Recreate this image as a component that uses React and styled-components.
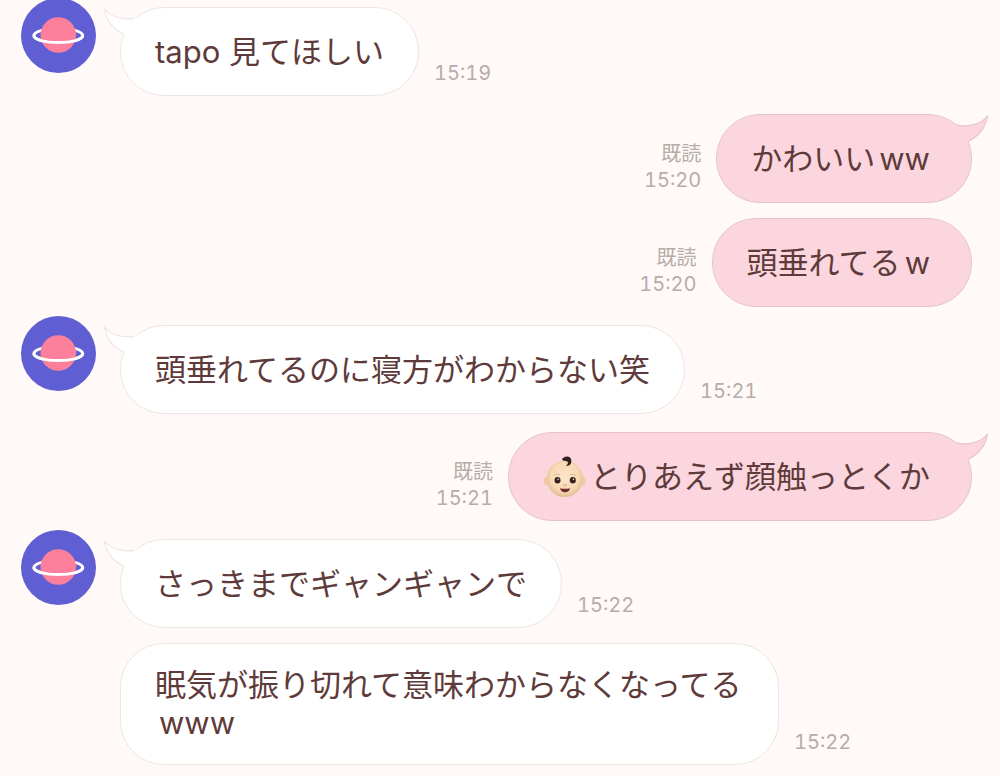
import React from 'react';
import styled, { createGlobalStyle, css } from 'styled-components';

const GlobalStyle = createGlobalStyle`
  * { box-sizing: border-box; }
  body {
    margin: 0;
    background: #fffaf7;
    font-family: Inter, "Noto Sans CJK JP", sans-serif;
    overflow-x: hidden;
  }
`;

const theme = {
  received: { fill: '#ffffff', line: '#ede5e3' },
  sent: { fill: '#fbd6de', line: '#e6c3cb' },
};

const Chat = styled.main`
  display: flex;
  flex-direction: column;
  gap: 18px;
  padding: 7px 28px 11px 21px;
`;

const Group = styled.section`
  display: flex;
  align-items: flex-start;
  gap: 24px;
  justify-content: ${(p) => (p.$sent ? 'flex-end' : 'flex-start')};
`;

const AvatarImage = styled.svg`
  flex: none;
  width: 75px;
  height: 75px;
  margin-top: -9px;
`;

const Messages = styled.div`
  display: flex;
  flex-direction: column;
  gap: 15px;
  min-width: 0;
`;

const Row = styled.div`
  display: flex;
  align-items: flex-end;
  gap: 15px;
  flex-direction: ${(p) => (p.$sent ? 'row-reverse' : 'row')};
`;

const Bubble = styled.div`
  position: relative;
  display: flex;
  align-items: center;
  max-width: 659px;
  min-height: 89px;
  padding: ${(p) => (p.$sent ? '22px 41px 22px 34px' : '22px 34px')};
  border: 1px solid ${(p) => theme[p.$sent ? 'sent' : 'received'].line};
  border-radius: 44px;
  background: ${(p) => theme[p.$sent ? 'sent' : 'received'].fill};
`;

const Text = styled.p`
  margin: 0;
  color: #5e3b3a;
  font-size: 31px;
  line-height: 38px;
`;

const Latin = styled.span`
  margin-left: 4px;
`;

const TailShape = styled.svg`
  position: absolute;
  top: -1px;
  width: 36px;
  height: 32px;
  ${(p) =>
    p.$sent
      ? css`
          right: -18px;
          transform: scaleX(-1);
        `
      : css`
          left: -18px;
        `}
`;

const Meta = styled.div`
  flex: none;
  margin-bottom: 10px;
  color: #b6acaa;
  font-size: 20px;
  line-height: 26px;
  text-align: ${(p) => (p.$sent ? 'right' : 'left')};
`;

const Read = styled.div`
  white-space: nowrap;
`;

const Time = styled.time`
  display: block;
  font-variant-numeric: tabular-nums;
`;

const BabyIcon = styled.svg`
  width: 43px;
  height: 43px;
  margin: -6px 4px -6px 0;
  vertical-align: -4px;
`;

function Avatar() {
  return (
    <AvatarImage viewBox="0 0 75 75" role="img" aria-label="planet">
      <circle cx="37.5" cy="37.5" r="37.5" fill="#605ed3" />
      <ellipse cx="37.3" cy="37.6" rx="24.4" ry="7" fill="none" stroke="#fff" strokeWidth="3" />
      <circle cx="37.3" cy="37" r="17.8" fill="#fc809c" />
      <path d="M12.9 37.6C12.9 41.8 24 44.6 37.3 44.6S61.7 41.8 61.7 37.6" fill="none" stroke="#fff" strokeWidth="3" />
    </AvatarImage>
  );
}

function Tail({ sent }) {
  const tone = theme[sent ? 'sent' : 'received'];
  return (
    <TailShape $sent={sent} viewBox="-17 0 36 32" aria-hidden="true">
      <path
        d="M16 9.5Q14 11.500 12 11.700C3 12.500-9 10.500-15.500 2C-14 13-7 22.500 3.500 27L7 30L19 14Z"
        fill={tone.fill}
      />
      <path
        d="M14.500 10.500Q13 11.600 12 11.700C3 12.500-9 10.500-15.500 2C-14 13-7 22.500 3.500 27"
        fill="none"
        stroke={tone.line}
        strokeWidth="1.1"
        strokeLinejoin="round"
      />
    </TailShape>
  );
}

function Baby() {
  return (
    <BabyIcon viewBox="0 0 43 43" role="img" aria-label="baby">
      <defs>
        <radialGradient id="skin" cx="50%" cy="45%" r="55%">
          <stop offset="0" stopColor="#fce6c9" />
          <stop offset="0.7" stopColor="#f7d9b5" />
          <stop offset="1" stopColor="#e5bb92" />
        </radialGradient>
      </defs>
      <ellipse cx="4" cy="26" rx="3.3" ry="4.5" fill="#efcaa3" />
      <ellipse cx="39.5" cy="26" rx="3.3" ry="4.5" fill="#efcaa3" />
      <ellipse cx="21.8" cy="23.8" rx="18" ry="18.3" fill="url(#skin)" />
      <path d="M19 4.5C20.5 1 27.5 0 28.3 5C28.7 9 26.5 11.3 23 10.8C25.5 8.8 25.5 6.8 23.8 6.2C22 5.5 20.5 6.5 19 4.5Z" fill="#2e211f" />
      <path d="M11 20.5Q14 18 17 20M27 20Q30 18 33 20.5" fill="none" stroke="#dfb98c" strokeWidth="1" />
      <ellipse cx="14.5" cy="25.3" rx="3" ry="3.3" fill="#3a231d" />
      <ellipse cx="29.8" cy="25.3" rx="3" ry="3.3" fill="#3a231d" />
      <circle cx="15.2" cy="24.2" r="0.7" fill="#fff" />
      <circle cx="30.5" cy="24.2" r="0.7" fill="#fff" />
      <path d="M20.2 29.8Q22.1 31 24 29.8" fill="none" stroke="#d9a777" strokeWidth="1.2" />
      <path d="M17 33.2Q22.1 34.4 27.2 33.2Q26.2 37.3 22.1 37.3T17 33.2Z" fill="#6b2c28" />
    </BabyIcon>
  );
}

function Message({ sent = false, tail = false, time, children }) {
  return (
    <Row $sent={sent}>
      <Bubble $sent={sent}>
        {tail && <Tail sent={sent} />}
        <Text>{children}</Text>
      </Bubble>
      <Meta $sent={sent}>
        {sent && <Read>既読</Read>}
        <Time>{time}</Time>
      </Meta>
    </Row>
  );
}

export default function App() {
  return (
    <>
      <GlobalStyle />
      <Chat lang="ja">
        <Group>
          <Avatar />
          <Messages>
            <Message tail time="15:19">tapo 見てほしい</Message>
          </Messages>
        </Group>
        <Group $sent>
          <Messages>
            <Message sent tail time="15:20">かわいい<Latin>ww</Latin></Message>
            <Message sent time="15:20">頭垂れてる<Latin>w</Latin></Message>
          </Messages>
        </Group>
        <Group>
          <Avatar />
          <Messages>
            <Message tail time="15:21">頭垂れてるのに寝方がわからない笑</Message>
          </Messages>
        </Group>
        <Group $sent>
          <Messages>
            <Message sent tail time="15:21"><Baby />とりあえず顔触っとくか</Message>
          </Messages>
        </Group>
        <Group>
          <Avatar />
          <Messages>
            <Message tail time="15:22">さっきまでギャンギャンで</Message>
            <Message time="15:22">
              眠気が振り切れて意味わからなくなってる<Latin>www</Latin>
            </Message>
          </Messages>
        </Group>
      </Chat>
    </>
  );
}
